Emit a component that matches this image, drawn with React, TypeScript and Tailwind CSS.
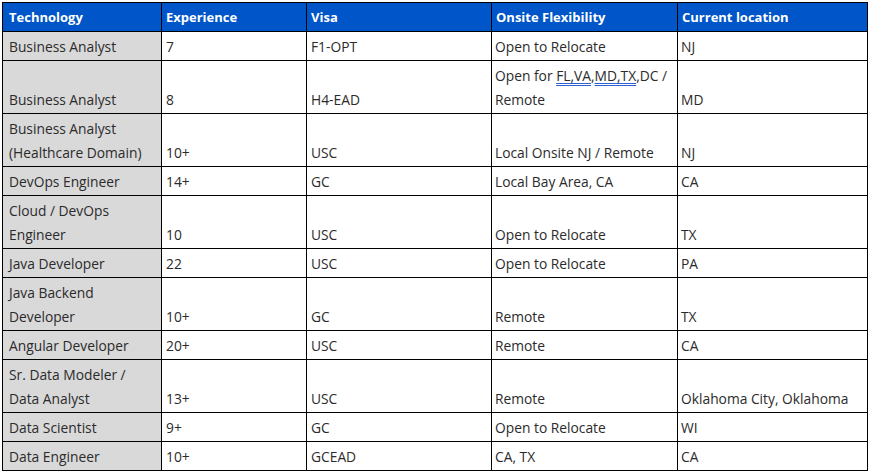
type Row = {
  tech: string[];
  exp: string;
  visa: string;
  onsite: React.ReactNode[];
  loc: string;
};

const Uline = ({ children }: { children: React.ReactNode }) => (
  <span className="underline decoration-double decoration-[#2f5fd0] underline-offset-2">{children}</span>
);

const rows: Row[] = [
  { tech: ["Business Analyst"], exp: "7", visa: "F1-OPT", onsite: ["Open to Relocate"], loc: "NJ" },
  {
    tech: ["Business Analyst"],
    exp: "8",
    visa: "H4-EAD",
    onsite: [
      <>
        Open for <Uline>FL,VA</Uline>,<Uline>MD,TX</Uline>,DC /
      </>,
      "Remote",
    ],
    loc: "MD",
  },
  {
    tech: ["Business Analyst", "(Healthcare Domain)"],
    exp: "10+",
    visa: "USC",
    onsite: ["Local Onsite NJ / Remote"],
    loc: "NJ",
  },
  { tech: ["DevOps Engineer"], exp: "14+", visa: "GC", onsite: ["Local Bay Area, CA"], loc: "CA" },
  { tech: ["Cloud / DevOps", "Engineer"], exp: "10", visa: "USC", onsite: ["Open to Relocate"], loc: "TX" },
  { tech: ["Java Developer"], exp: "22", visa: "USC", onsite: ["Open to Relocate"], loc: "PA" },
  { tech: ["Java Backend", "Developer"], exp: "10+", visa: "GC", onsite: ["Remote"], loc: "TX" },
  { tech: ["Angular Developer"], exp: "20+", visa: "USC", onsite: ["Remote"], loc: "CA" },
  {
    tech: ["Sr. Data Modeler /", "Data Analyst"],
    exp: "13+",
    visa: "USC",
    onsite: ["Remote"],
    loc: "Oklahoma City, Oklahoma",
  },
  { tech: ["Data Scientist"], exp: "9+", visa: "GC", onsite: ["Open to Relocate"], loc: "WI" },
  { tech: ["Data Engineer"], exp: "10+", visa: "GCEAD", onsite: ["CA, TX"], loc: "CA" },
];

const headers = ["Technology", "Experience", "Visa", "Onsite Flexibility", "Current location"];
const widths = ["w-[159px]", "w-[145px]", "w-[185px]", "w-[186px]", "w-[190px]"];

const Lines = ({ items }: { items: React.ReactNode[] }) => (
  <>
    {items.map((t, i) => (
      <div key={i}>{t}</div>
    ))}
  </>
);

export default function App() {
  return (
    <div className="w-[896px] h-[471px] bg-white pt-[2px] pl-[2px] font-['Open_Sans',sans-serif]">
      <table className="table-fixed border-collapse w-[865px] text-[13.8px] leading-[24px] text-[#2b2b2b]">
        <colgroup>
          {widths.map((w, i) => (
            <col key={i} className={w} />
          ))}
        </colgroup>
        <thead>
          <tr className="bg-[#0055c8] text-white h-[29px]">
            {headers.map((h, i) => (
              <th
                key={h}
                className={
                  i === 0
                    ? "border border-black pl-[6px] pr-[4px] text-left font-bold text-[13px] align-middle"
                    : "border border-black px-[4px] text-left font-bold text-[13px] align-middle"
                }
              >
                {h}
              </th>
            ))}
          </tr>
        </thead>
        <tbody>
          {rows.map((r, i) => (
            <tr key={i}>
              <td className="border border-black bg-[#d9d9d9] px-[6px] pt-[3px] pb-[1px] align-bottom whitespace-nowrap">
                <Lines items={r.tech} />
              </td>
              <td className="border border-black px-[4px] pt-[3px] pb-[1px] align-bottom">{r.exp}</td>
              <td className="border border-black px-[4px] pt-[3px] pb-[1px] align-bottom">{r.visa}</td>
              <td className="border border-black px-[3px] pt-[3px] pb-[1px] align-bottom whitespace-nowrap">
                <Lines items={r.onsite} />
              </td>
              <td className="border border-black px-[3px] pt-[3px] pb-[1px] align-bottom whitespace-nowrap">{r.loc}</td>
            </tr>
          ))}
        </tbody>
      </table>
    </div>
  );
}
